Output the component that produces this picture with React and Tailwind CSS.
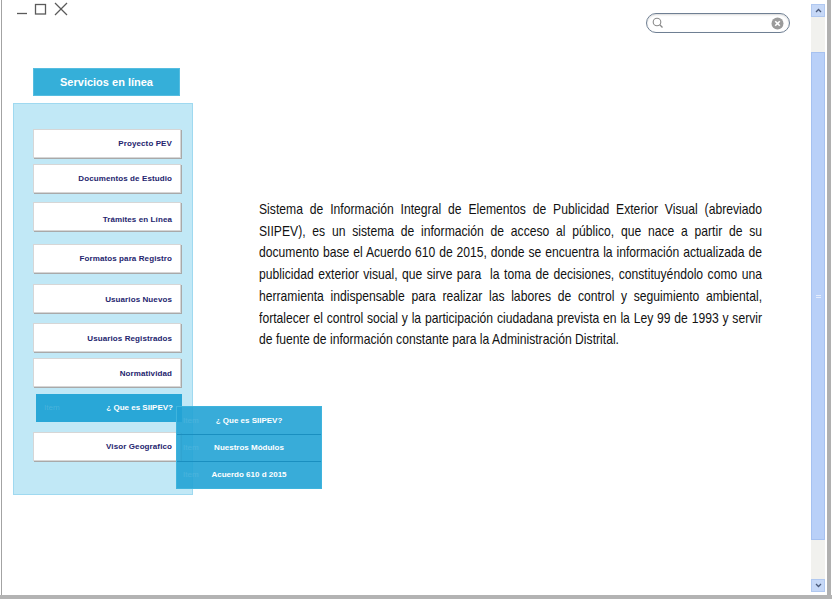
import React from "react";

const items = [
  { label: "Proyecto PEV", mt: "mt-[25px]" },
  { label: "Documentos de Estudio", mt: "mt-[6px]" },
  { label: "Trámites en Línea", mt: "mt-[9px]", extra: "pt-[7px]" },
  { label: "Formatos para Registro", mt: "mt-[13px]" },
  { label: "Usuarios Nuevos", mt: "mt-[11px]", extra: "pt-[3px]" },
  { label: "Usuarios Registrados", mt: "mt-[10px]", extra: "pt-[2px]" },
  { label: "Normatividad", mt: "mt-[6px]", extra: "pt-[3px]" },
];

const paragraph = [
  "Sistema de Información Integral de Elementos de Publicidad Exterior Visual (abreviado",
  "SIIPEV), es un sistema de información de acceso al público, que nace a partir de su",
  "documento base el Acuerdo 610 de 2015, donde se encuentra la información actualizada de",
  "publicidad exterior visual, que sirve para  la toma de decisiones, constituyéndolo como una",
  "herramienta indispensable para realizar las labores de control y seguimiento ambiental,",
  "fortalecer el control social y la participación ciudadana prevista en la Ley 99 de 1993 y servir",
];

function MenuItem({ label, mt, extra = "" }) {
  return (
    <div
      className={`${mt} ml-[19px] w-[148px] h-[29px] bg-white border border-[#d6d6d6] shadow-[1px_1px_0_#a9a9a9] flex items-center justify-end pr-[8px] ${extra}`}
    >
      <span className="font-['Liberation_Sans',sans-serif] font-bold text-[8px] text-[#24246e] tracking-[0.1px]">
        {label}
      </span>
    </div>
  );
}

export default function App() {
  return (
    <div className="w-[832px] h-[599px] flex flex-col bg-white overflow-hidden font-['Liberation_Sans',sans-serif]">
      <div className="flex flex-1 min-h-0">
        <div className="w-[1px] ml-[1px] bg-[#a3a3a3]" />
        <main className="flex-1 min-w-0 flex flex-col">
          {/* header */}
          <div className="h-[36px] flex justify-between">
            <svg width="70" height="18" viewBox="0 0 70 18" className="shrink-0">
              <line x1="15" y1="13.5" x2="25" y2="13.5" stroke="#5a5a5a" strokeWidth="1.3" />
              <rect x="33.5" y="4.5" width="10" height="9.5" fill="none" stroke="#5a5a5a" strokeWidth="1.3" />
              <line x1="53" y1="3" x2="65" y2="15" stroke="#5a5a5a" strokeWidth="1.3" />
              <line x1="65" y1="3" x2="53" y2="15" stroke="#5a5a5a" strokeWidth="1.3" />
            </svg>
            <div className="mt-[13px] mr-[21px] w-[144px] h-[20px] rounded-full border border-[#6f7f93] shadow-[inset_0_1px_2px_rgba(0,0,0,0.15)] flex items-center justify-between px-[5px]">
              <svg width="12" height="12" viewBox="0 0 12 12">
                <circle cx="5" cy="5" r="3.8" fill="none" stroke="#8a8a8a" strokeWidth="1.1" />
                <line x1="7.8" y1="7.8" x2="10.5" y2="10.5" stroke="#8a8a8a" strokeWidth="1.3" />
              </svg>
              <svg width="13" height="13" viewBox="0 0 13 13">
                <circle cx="6.5" cy="6.5" r="6" fill="#9b9b9b" />
                <line x1="4.2" y1="4.2" x2="8.8" y2="8.8" stroke="#fff" strokeWidth="1.6" />
                <line x1="8.8" y1="4.2" x2="4.2" y2="8.8" stroke="#fff" strokeWidth="1.6" />
              </svg>
            </div>
          </div>

          {/* body */}
          <div className="flex">
            <div className="ml-[11px] w-[180px] shrink-0">
              <div className="mt-[32px] ml-[20px] w-[147px] h-[28px] bg-[#35afd9] border border-[#55bde0] flex items-center justify-center">
                <span className="text-white font-bold text-[11px]">Servicios en línea</span>
              </div>
              <div className="relative mt-[7px] h-[392px] bg-[#c1e8f6] border border-[#9fd9f0] flex flex-col">
                {items.map((it) => (
                  <MenuItem key={it.label} {...it} />
                ))}
                <div className="mt-[7px] ml-[22px] w-[146px] h-[28px] bg-[#29a7d7] flex items-center justify-between pl-[8px] pr-[9px]">
                  <span className="text-[8px] text-white/15">Item</span>
                  <span className="font-bold text-[8px] text-white">¿ Que es SIIPEV?</span>
                </div>
                <MenuItem label="Visor Geografico" mt="mt-[10px]" />

                {/* submenu */}
                <div className="absolute left-[162px] top-[302px] w-[146px] flex flex-col bg-[#22a3d5]/90 border border-[#3fb4dd]">
                  {["¿ Que es SIIPEV?", "Nuestros Módulos", "Acuerdo 610 d 2015"].map((s, i) => (
                    <div
                      key={s}
                      className={`relative h-[27px] flex items-center justify-center ${i > 0 ? "border-t border-[#1a8fc0]" : ""}`}
                    >
                      <span className="absolute left-[6px] text-[8px] text-white/10">Item</span>
                      <span className="font-bold text-[8px] text-white">{s}</span>
                    </div>
                  ))}
                </div>
              </div>
            </div>

            <div className="ml-[66px] mt-[162px] w-[503px] shrink-0">
              <div className="w-[621px] origin-top-left scale-x-[0.81] text-[15px] leading-[21.7px] text-[#111]">
                {paragraph.map((l, i) => (
                  <div key={i} className="text-justify [text-align-last:justify] whitespace-pre">
                    {l}
                  </div>
                ))}
                <div className="whitespace-nowrap">
                  de fuente de información constante para la Administración Distrital.
                </div>
              </div>
            </div>
          </div>
        </main>

        {/* scrollbar */}
        <div className="w-[14px] mt-[4px] mb-[3px] bg-[#f1f1ee] flex flex-col">
          <div className="h-[13px] bg-[#c6d8f7] border border-[#b0c8f0] flex items-center justify-center">
            <svg width="7" height="5" viewBox="0 0 7 5">
              <path d="M1 4 L3.5 1.5 L6 4" fill="none" stroke="#4a5a7a" strokeWidth="1.3" />
            </svg>
          </div>
          <div className="mt-[35px] h-[488px] bg-[#b9d0f8] border border-[#a6c1f0] flex items-center justify-center">
            <div className="flex flex-col gap-[1px]">
              <div className="w-[5px] h-[1px] bg-[#e3ecfd]" />
              <div className="w-[5px] h-[1px] bg-[#e3ecfd]" />
            </div>
          </div>
          <div className="flex-1" />
          <div className="h-[13px] bg-[#c6d8f7] border border-[#b0c8f0] flex items-center justify-center">
            <svg width="7" height="5" viewBox="0 0 7 5">
              <path d="M1 1 L3.5 3.5 L6 1" fill="none" stroke="#4a5a7a" strokeWidth="1.3" />
            </svg>
          </div>
        </div>
        <div className="w-[1px] ml-[1px]" />
        <div className="w-[4px] bg-[#b0b0b0]" />
        <div className="w-[1px]" />
      </div>
      <div className="h-[4px] bg-[#b3b3b3]" />
    </div>
  );
}
